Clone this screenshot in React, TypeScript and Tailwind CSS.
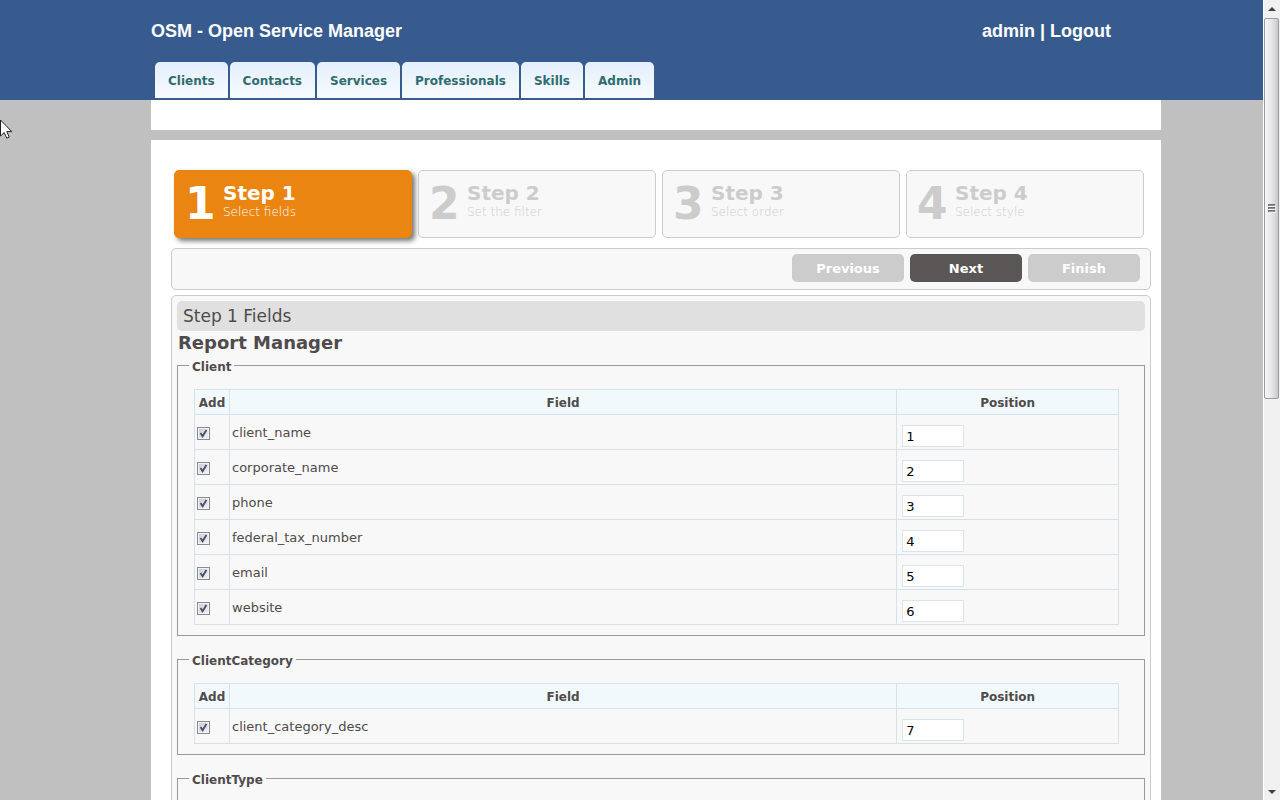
import React from "react";

const tabs = ["Clients", "Contacts", "Services", "Professionals", "Skills", "Admin"];

const steps = [
  { n: 1, text: "Select fields" },
  { n: 2, text: "Set the filter" },
  { n: 3, text: "Select order" },
  { n: 4, text: "Select style" },
];

const groups = [
  {
    name: "Client",
    fields: ["client_name", "corporate_name", "phone", "federal_tax_number", "email", "website"],
    start: 1,
  },
  { name: "ClientCategory", fields: ["client_category_desc"], start: 7 },
  { name: "ClientType", fields: [], start: 8 },
];

function Tick({ id }: { id: string }) {
  return (
    <span className="relative block size-[13px]">
      <input
        id={id}
        type="checkbox"
        defaultChecked
        className="peer block size-[13px] appearance-none border border-[#8a8b90] bg-linear-to-br from-[#c9cbd3] to-[#f4f4f8] shadow-[inset_0_0_0_1px_#f2f2f4]"
      />
      <svg
        viewBox="0 0 13 13"
        className="pointer-events-none absolute inset-0 hidden size-[13px] peer-checked:block"
        aria-hidden="true"
      >
        <path d="M3.5 6 L5.6 9.2 L9.4 3" fill="none" stroke="#4b4d68" strokeWidth="1.8" />
      </svg>
    </span>
  );
}

function FieldGroup({ name, fields, start }: { name: string; fields: string[]; start: number }) {
  return (
    <fieldset className="mb-[15px] min-h-24 border border-[#999999] pr-[25px] pb-2.5 pl-4">
      <legend className="-ml-[5px] px-[3px] pt-1 text-xs leading-3 font-bold">{name}</legend>
      {fields.length > 0 && (
        <table className="mt-4 w-full table-fixed border-collapse">
          <colgroup>
            <col className="w-[35px]" />
            <col />
            <col className="w-[24%]" />
          </colgroup>
          <thead>
            <tr className="h-[25px] bg-[#f2f9fd] text-xs font-bold">
              <th className="border border-[#d5e3e8] px-0 pt-0.5 pb-0">Add</th>
              <th className="border border-[#d5e3e8] px-0 pt-0.5 pb-0">Field</th>
              <th className="border border-[#d5e3e8] px-0 pt-0.5 pb-0">Position</th>
            </tr>
          </thead>
          <tbody>
            {fields.map((field, i) => (
              <tr key={field} className="h-[35px] text-[13px]">
                <td className="border border-[#d5e3e8] pt-0.5 pr-0 pb-0 pl-0.5">
                  <Tick id={field} />
                </td>
                <td className="border border-[#d5e3e8] pt-0.5 pr-0 pb-0 pl-0.5">
                  <label htmlFor={field}>{field}</label>
                </td>
                <td className="border border-[#d5e3e8] pt-2.5 pr-0 pb-0.5 pl-[5px]">
                  <input
                    type="text"
                    aria-label={`${field} position`}
                    defaultValue={start + i}
                    className="block h-[22px] w-[62px] border border-[#d9e5ea] bg-white px-[3px] text-[13px] text-black"
                  />
                </td>
              </tr>
            ))}
          </tbody>
        </table>
      )}
    </fieldset>
  );
}

function ScrollBar() {
  return (
    <aside className="flex w-[17px] shrink-0 flex-col border-l border-white bg-[#f0f0f0]">
      <button type="button" aria-label="Scroll up" className="flex h-[18px] items-center justify-center">
        <svg viewBox="0 0 8 4" className="h-1 w-2">
          <path d="M0 4 L4 0 L8 4 Z" fill="#404040" />
        </svg>
      </button>
      <div className="mr-px flex h-[381px] items-center justify-center rounded-xs border border-[#9a9a9e] bg-linear-to-r from-[#f6f6f6] via-[#e6e6ea] to-[#c8c8ce]">
        <svg viewBox="0 0 8 9" className="h-[9px] w-2" aria-hidden="true">
          <path d="M0 1 H7 M0 4 H7 M0 7 H7" stroke="#4a4a4e" strokeWidth="1.3" />
          <path d="M1 2.2 H8 M1 5.2 H8 M1 8.2 H8" stroke="#ffffff" strokeWidth="0.8" />
        </svg>
      </div>
      <button type="button" aria-label="Scroll down" className="mt-auto flex h-[17px] items-center justify-center">
        <svg viewBox="0 0 8 4" className="h-1 w-2">
          <path d="M0 0 L4 4 L8 0 Z" fill="#404040" />
        </svg>
      </button>
    </aside>
  );
}

export default function App() {
  return (
    <div className="relative flex h-screen overflow-hidden bg-[#c0c0c0] font-['DejaVu_Sans',sans-serif] text-[#4f4b4c]">
      <div className="min-w-0 flex-1 overflow-hidden">
        <header className="bg-[#385b8f] pr-[102px] pb-0.5 pl-[151px]">
          <div className="flex h-[62px] items-center justify-between pr-[50px] font-['Liberation_Sans',sans-serif] text-lg font-bold text-white">
            <h1>OSM - Open Service Manager</h1>
            <p>
              <a href="#admin">admin</a> | <a href="#logout">Logout</a>
            </p>
          </div>
          <nav className="flex gap-0.5 pl-1">
            {tabs.map((tab) => (
              <a
                key={tab}
                href={`#${tab}`}
                className="flex h-9 items-center rounded-t-[5px] bg-linear-to-b from-[#e4effb] to-[#f6fbff] px-[13px] pt-0.5 text-xs font-bold text-[#2f6c70]"
              >
                {tab}
              </a>
            ))}
          </nav>
        </header>

        <div className="pr-[102px] pl-[151px]">
          <div className="h-[30px] bg-white" />
          <main className="mt-2.5 bg-white pt-[30px] pr-2.5 pb-5 pl-5">
            <ol className="mr-[7px] ml-[3px] grid grid-cols-4 gap-1.5">
              {steps.map(({ n, text }) => (
                <li
                  key={n}
                  className={
                    n === 1
                      ? "flex h-[68px] rounded-[5px] border border-[#ea8511] bg-[#ea8511] pl-2.5 text-white shadow-[3px_3px_5px_#777777]"
                      : "flex h-[68px] rounded-[5px] border border-[#cccccc] bg-[#f8f8f8] pl-2.5 text-[#cccccc]"
                  }
                >
                  <span className="w-[38px] text-[44px] leading-[66px] font-bold">{n}</span>
                  <span className="flex flex-col pt-2.5">
                    <span className="text-xl leading-6 font-bold">Step {n}</span>
                    <span className="text-xs leading-[14px] font-extralight">{text}</span>
                  </span>
                </li>
              ))}
            </ol>

            <div className="mt-2.5 flex h-[42px] justify-end gap-1.5 rounded-[5px] border border-[#cccccc] bg-[#f8f8f8] pt-[5px] pr-2.5 text-[13px] font-bold text-white">
              <button type="button" disabled className="h-7 w-28 rounded-[5px] bg-[#cccccc] pt-0.5">
                Previous
              </button>
              <button type="button" className="h-7 w-28 rounded-[5px] bg-[#5a5655] pt-0.5">
                Next
              </button>
              <button type="button" disabled className="h-7 w-28 rounded-[5px] bg-[#cccccc] pt-0.5">
                Finish
              </button>
            </div>

            <section className="mt-[5px] rounded-[5px] border border-[#cccccc] bg-[#f8f8f8] p-[5px]">
              <h2 className="rounded-[5px] bg-[#e0e0e0] pl-1.5 text-[17px] leading-[30px]">Step 1 Fields</h2>
              <h3 className="mb-0.5 pl-px text-lg leading-6 font-bold">Report Manager</h3>
              {groups.map((group) => (
                <FieldGroup key={group.name} {...group} />
              ))}
            </section>
          </main>
        </div>
      </div>

      <ScrollBar />

      <svg viewBox="0 0 13 20" className="pointer-events-none absolute top-[119px] left-0 h-5 w-[13px]" aria-hidden="true">
        <path
          d="M0.5 1 V17 L4.2 13.6 L6.8 19.2 L9.2 18.1 L6.8 12.6 H11.8 Z"
          fill="#ffffff"
          stroke="#222222"
          strokeWidth="1"
        />
      </svg>
    </div>
  );
}
